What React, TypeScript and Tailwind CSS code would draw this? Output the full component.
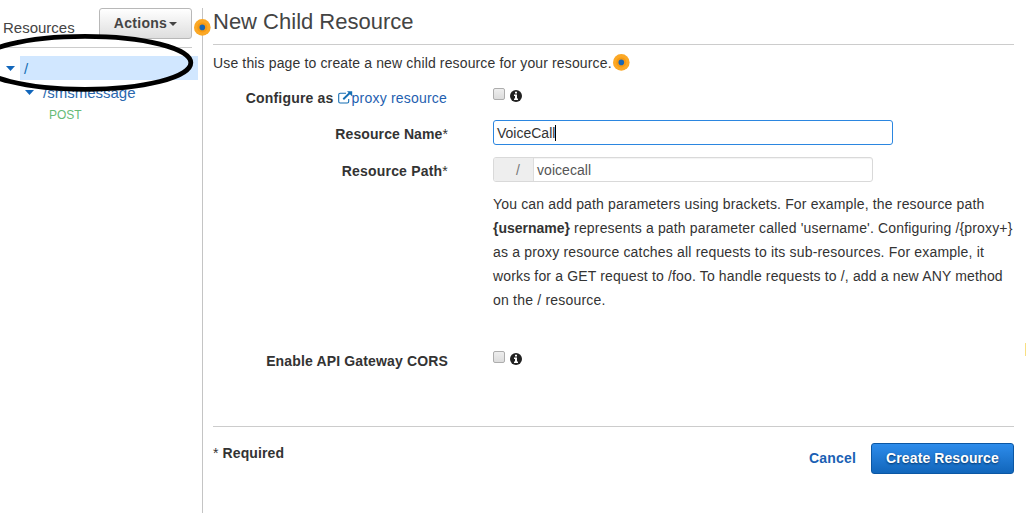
import React from "react";

function Caret({ className }: { className: string }) {
  return (
    <svg viewBox="0 0 8 5" preserveAspectRatio="none" className={className} fill="currentColor">
      <path d="M0 0h8L4 5z" />
    </svg>
  );
}

function Hotspot({ className }: { className: string }) {
  return (
    <svg viewBox="0 0 18 18" className={`absolute h-[18px] w-[18px] ${className}`}>
      <circle cx="9.3" cy="9.4" r="8.3" fill="#fba826" />
      <circle cx="9.3" cy="9.4" r="5" fill="#f79a12" />
      <circle cx="9.3" cy="9.4" r="2.8" fill="#1766b5" />
    </svg>
  );
}

function ExternalIcon() {
  return (
    <svg viewBox="0 0 15 13" className="mt-[-2px] h-[13px] w-[15px] shrink-0 text-[#146eb4]" fill="none" stroke="currentColor">
      <path d="M8 2.2H2.2Q.7 2.2 .7 3.7v6.8Q.7 12 2.2 12h7q1.5 0 1.5-1.5V8" strokeWidth="1.1" />
      <path d="M5.3 8.3L12 1.8" strokeWidth="1.9" />
      <path d="M9 .2h5.2v5.2z" fill="currentColor" stroke="none" />
    </svg>
  );
}

function InfoIcon() {
  return (
    <svg viewBox="0 0 12 12" className="mt-[2px] ml-[5px] h-3 w-3">
      <circle cx="6" cy="6" r="6" fill="#222" />
      <path d="M5 1.8h2v1.7H5zM4 4.6h3v4h1v1.5H4V8.6h1V6H4z" fill="#fff" />
    </svg>
  );
}

function CheckWithInfo() {
  return (
    <div className="flex h-5">
      <span className="h-3 w-3 rounded-[2px] border border-[#adadad] bg-linear-to-b from-[#eeeeee] to-[#dcdcdc]" />
      <InfoIcon />
    </div>
  );
}

function Label({ children, className }: { children: React.ReactNode; className: string }) {
  return <div className={`flex w-[235px] shrink-0 justify-end leading-5 font-bold whitespace-nowrap ${className}`}>{children}</div>;
}

export default function App() {
  return (
    <div className="relative flex h-[513px] w-[1026px] overflow-hidden bg-white font-['Liberation_Sans',Arial,sans-serif] text-[14px] leading-5 text-[#333]">
      <aside className="w-[202px] shrink-0 pt-2">
        <div className="flex h-10 w-48 justify-between border-b border-[#ccc] pl-[3px]">
          <span className="mt-[10px] text-[15px] text-[#444]">Resources</span>
          <button className="flex h-[31px] w-[93px] items-center justify-center gap-[2px] rounded-[3px] border border-[#b8b8b8] bg-linear-to-b from-white to-[#dedede] pb-px font-bold tracking-[0.3px] text-[#444]">
            Actions
            <Caret className="mt-px h-1 w-2" />
          </button>
        </div>
        <div className="mt-2 flex h-6 w-[198px] items-center pl-[6px] text-[#146eb4]">
          <Caret className="mt-px h-[5px] w-[9px] text-[#1166bb]" />
          <div className="ml-[5px] h-6 flex-1 bg-[#d1e7ff] pl-1 text-[15px] leading-[25px]">/</div>
        </div>
        <div className="flex h-6 items-center pl-[25px] text-[#2a68ae]">
          <Caret className="mt-px h-[5px] w-[9px] text-[#1166bb]" />
          <span className="mt-[2px] ml-[9px] text-[15px]">/smsmessage</span>
        </div>
        <div className="pl-[49px] text-[12px] leading-[22px] text-[#66bb77]">POST</div>
      </aside>

      <main className="mt-2 w-[812px] shrink-0 border-l border-[#c4c4c4] pl-[10px]">
        <h1 className="h-[37px] border-b border-[#ccc] pt-[2px] text-[22px] leading-6 text-[#444]">New Child Resource</h1>
        <p className="mt-2 tracking-[0.14px] whitespace-nowrap">Use this page to create a new child resource for your resource.</p>

        <div className="mt-[15px] flex h-9">
          <Label className="tracking-[0.2px]">
            Configure as
            <span className="ml-1 flex h-5 items-center font-normal text-[#1f5fb0]">
              <ExternalIcon />
              <span className="-mr-px ml-[-1px] pr-[2px]">proxy resource</span>
            </span>
          </Label>
          <div className="ml-[45px]"><CheckWithInfo /></div>
        </div>
        <div className="flex h-[37px]">
          <Label className="tracking-[0.1px]">Resource Name<span className="font-normal">*</span></Label>
          <div className="-mt-1 ml-[45px] flex h-[25px] w-[400px] items-center rounded-[3px] border border-[#2b86e0] pl-[3px]">
            VoiceCall<span className="h-4 w-px bg-black" />
          </div>
        </div>
        <div className="flex h-[31px]">
          <Label className="tracking-[0.2px]">Resource Path<span className="font-normal">*</span></Label>
          <div className="-mt-1 ml-[45px] flex h-[25px] w-[380px] items-center overflow-hidden rounded-[3px] border border-[#d9d9d9] text-[#555] shadow-[inset_0_1px_1px_#0000000d]">
            <span className="flex h-full w-10 items-center border-r border-[#ddd] bg-[#eee] pl-[22px] text-[#777]">/</span>
            <span className="pl-[3px] tracking-[0.05px]">voicecall</span>
          </div>
        </div>
        <div className="ml-[280px] leading-6 tracking-[0.2px] whitespace-nowrap">
          <p className="tracking-[0.16px]">You can add path parameters using brackets. For example, the resource path</p>
          <p className="tracking-[0.16px]"><b className="tracking-[0px]">{"{username}"}</b> represents a path parameter called 'username'. Configuring /{"{proxy+}"}</p>
          <p className="tracking-[0.18px]">as a proxy resource catches all requests to its sub-resources. For example, it</p>
          <p className="tracking-[0.15px]">works for a GET request to /foo. To handle requests to /, add a new ANY method</p>
          <p>on the / resource.</p>
        </div>
        <div className="mt-[39px] flex h-[75px]">
          <Label className="tracking-[0.15px]">Enable API Gateway CORS</Label>
          <div className="ml-[45px]"><CheckWithInfo /></div>
        </div>
        <footer className="flex justify-between border-t border-[#ccc] pt-4">
          <div className="font-bold tracking-[0.1px]"><span className="font-normal">*</span> Required</div>
          <div className="flex h-[31px] items-center gap-[15px] font-bold tracking-[0.2px]">
            <span className="-mt-[2px] text-[#1a5fb4]">Cancel</span>
            <button className="h-[31px] w-[143px] rounded-[3px] border border-[#0b57a4] bg-linear-to-b from-[#2d8ceb] to-[#1166bb] pb-[2px] tracking-[0.1px] text-white [text-shadow:0_1px_2px_#003366]">Create Resource</button>
          </div>
        </footer>
      </main>

      <Hotspot className="top-[18px] left-[193px]" />
      <Hotspot className="top-[53px] left-[612px]" />
      <svg viewBox="0 0 200 100" className="absolute top-0 left-0 h-[100px] w-[200px]" fill="none" stroke="#000" strokeWidth="4.8">
        <ellipse cx="85" cy="62.8" rx="105.8" ry="26.5" />
      </svg>
      <span className="absolute top-[343px] left-[1025px] h-[13px] w-px bg-[#f8df82]" />
    </div>
  );
}
